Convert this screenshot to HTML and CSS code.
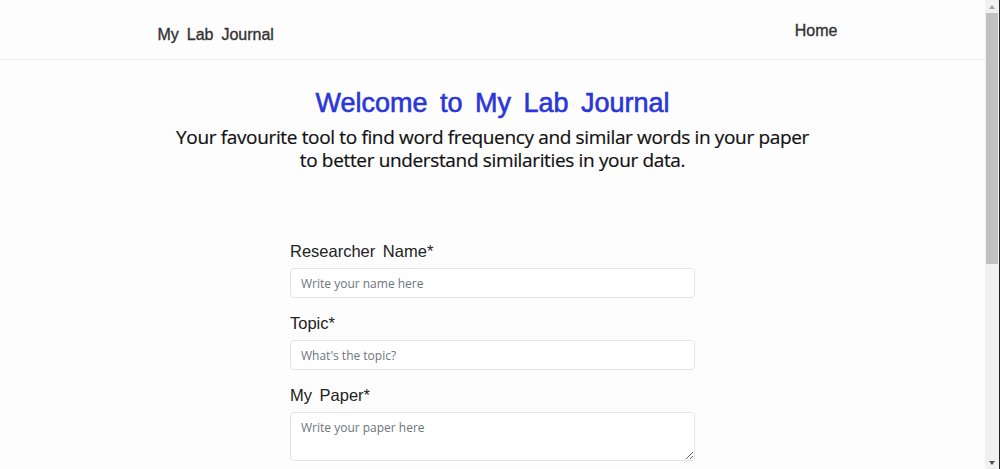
FILE: index.html
```html
<!DOCTYPE html>
<html lang="en">
<head>
<meta charset="utf-8">
<title>My Lab Journal</title>
<link rel="stylesheet" href="styles.css">
</head>
<body>
<div class="page">
  <header class="navbar">
    <div class="nav-inner">
      <a class="brand" href="#">My Lab Journal</a>
      <a class="nav-link" href="#">Home</a>
    </div>
  </header>
  <main class="main">
    <section class="hero">
      <h1 class="title">Welcome to My Lab Journal</h1>
      <p class="subtitle">Your favourite tool to find word frequency and similar words in your paper<br>to better understand similarities in your data.</p>
    </section>
    <form class="form">
      <div class="field">
        <label class="label" for="name">Researcher Name*</label>
        <input class="input" id="name" type="text" placeholder="Write your name here">
      </div>
      <div class="field">
        <label class="label" for="topic">Topic*</label>
        <input class="input" id="topic" type="text" placeholder="What's the topic?">
      </div>
      <div class="field">
        <label class="label" for="paper">My Paper*</label>
        <textarea class="textarea" id="paper" placeholder="Write your paper here"></textarea>
      </div>
      <div class="field">
        <button class="btn" type="button">Submit</button>
      </div>
    </form>
  </main>
</div>
<div class="scrollbar" aria-hidden="true">
  <div class="sb-btn"><span class="arrow-up"></span></div>
  <div class="sb-track">
    <div class="sb-thumb"></div>
  </div>
  <div class="sb-btn"><span class="arrow-down"></span></div>
</div>
</body>
</html>
```
FILE: styles.css
```css
html, body {
  margin: 0;
  padding: 0;
  background: #fdfdfd;
}
body {
  display: flex;
  align-items: flex-start;
  font-family: "Liberation Sans", Arial, sans-serif;
  color: #212529;
}
.page {
  flex: 1;
  min-width: 0;
}
.scrollbar {
  width: 15px;
  height: 100vh;
  flex: none;
  background: #f1f1f1;
  display: flex;
  flex-direction: column;
  box-sizing: border-box;
  border-right: 1px solid #222;
}
.sb-btn {
  height: 13px;
  display: flex;
  align-items: center;
  justify-content: center;
}
.arrow-up, .arrow-down {
  width: 0;
  height: 0;
  border-left: 3.5px solid transparent;
  border-right: 3.5px solid transparent;
}
.arrow-up {
  border-bottom: 4px solid #a3a3a3;
}
.arrow-down {
  border-top: 4px solid #505050;
}
.sb-track {
  flex: 1;
  padding: 0 1px;
}
.sb-thumb {
  height: 251px;
  background: #c1c1c1;
}
.navbar {
  height: 59px;
  border-bottom: 1px solid #eeeeee;
  background: #fdfdfd;
}
.nav-inner {
  width: 690px;
  margin: 0 auto;
  padding: 0 0 0 10px;
  box-sizing: border-box;
  display: flex;
  justify-content: space-between;
}
.brand {
  margin-top: 26px;
  font-size: 16px;
  font-weight: 500;
  color: #333;
  text-decoration: none;
  word-spacing: 3.5px;
  -webkit-text-stroke: 0.35px #333;
}
.nav-link {
  margin-top: 22px;
  font-size: 16px;
  color: #333;
  text-decoration: none;
  -webkit-text-stroke: 0.35px #333;
}
.main {
  padding-bottom: 400px;
}
.hero {
  text-align: center;
  padding-top: 26px;
}
.title {
  margin: 0;
  font-size: 27px;
  font-weight: normal;
  color: #2a36d8;
  line-height: 34px;
  word-spacing: 5px;
  -webkit-text-stroke: 0.6px #2a36d8;
}
.subtitle {
  margin: 6px 0 0;
  font-family: "Open Sans", "Noto Sans", sans-serif;
  font-size: 19px;
  line-height: 23px;
  font-weight: 500;
  color: #111;
  letter-spacing: -0.35px;
  -webkit-text-stroke: 0.2px #111;
}
.form {
  width: 405px;
  margin: 68px auto 0;
  display: flex;
  flex-direction: column;
  gap: 14px;
}
.field {
  display: flex;
  flex-direction: column;
  gap: 6px;
}
.label {
  font-size: 16.5px;
  line-height: 22px;
  color: #222;
  word-spacing: 3px;
}
.input, .textarea {
  box-sizing: border-box;
  width: 100%;
  border: 1px solid #e2e4e7;
  border-radius: 4px;
  background: #fff;
  font-family: "Open Sans", "Noto Sans", sans-serif;
  font-size: 12px;
  padding: 0 10px;
  color: #333;
}
.input {
  height: 30px;
}
.textarea {
  height: 49px;
  padding-top: 6px;
  resize: vertical;
}
.input::placeholder, .textarea::placeholder {
  color: #6c757d;
}
.btn {
  align-self: flex-start;
  font-size: 15px;
  padding: 6px 14px;
  border: 1px solid #2a36d8;
  background: #2a36d8;
  color: #fff;
  border-radius: 4px;
}
```
